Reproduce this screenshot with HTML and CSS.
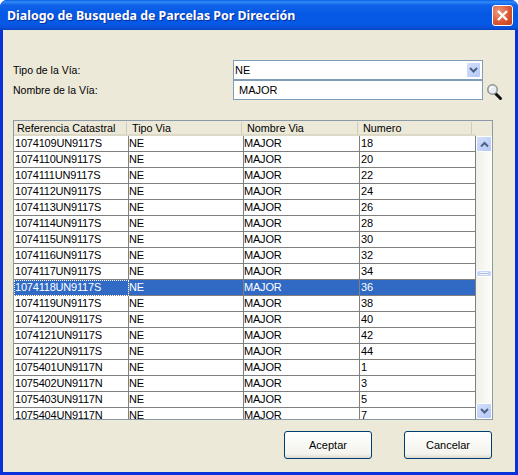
FILE: index.html
```html
<!DOCTYPE html>
<html lang="es">
<head>
  <meta charset="UTF-8">
  <title>Dialogo de Busqueda de Parcelas Por Dirección</title>
  <link rel="stylesheet" href="styles.css">
</head>
<body>

<div class="window">
  <div class="titlebar">
    <span class="title">Dialogo de Busqueda de Parcelas Por Dirección</span>
    <button class="close" aria-label="Cerrar">
      <svg width="13" height="13" viewBox="0 0 13 13"><path d="M2 2l9 9M11 2l-9 9" stroke="#fff" stroke-width="2.4" fill="none"/></svg>
    </button>
  </div>

  <div class="content">
    <div class="form">
      <label>Tipo de la Vía:</label>
      <div class="field combo">
        <span>NE</span>
        <span class="sbtn combo-btn">
          <svg width="9" height="7" viewBox="0 0 9 7"><path d="M1 1l3.5 3.5L8 1" stroke="#4d6185" stroke-width="2" fill="none"/></svg>
        </span>
      </div>
      <span></span>
      <label>Nombre de la Vía:</label>
      <div class="field text">MAJOR</div>
      <svg class="lens" width="17" height="18" viewBox="0 0 17 18">
        <path d="M9.5 10.5l5 5" stroke="#111" stroke-width="3" stroke-linecap="round"/>
        <circle cx="6.5" cy="6.5" r="4.7" fill="#e8eef0" stroke="#8a9296" stroke-width="1.5"/>
        <path d="M4 7a3 3 0 0 1 3-3" stroke="#fff" stroke-width="1.2" fill="none"/>
      </svg>
    </div>

    <div class="grid">
      <div class="grid-main">
        <table>
          <thead>
            <tr>
              <th><span>Referencia Catastral</span></th>
              <th><span>Tipo Via</span></th>
              <th><span>Nombre Via</span></th>
              <th><span>Numero</span></th>
            </tr>
          </thead>
          <tbody id="rows"></tbody>
        </table>
      </div>
      <div class="scrollbar">
        <div class="scroll-head"></div>
        <span class="sbtn">
          <svg width="9" height="7" viewBox="0 0 9 7"><path d="M1 5.5L4.5 2 8 5.5" stroke="#4d6185" stroke-width="2" fill="none"/></svg>
        </span>
        <div class="track"><span class="thumb"><span class="grip"></span></span></div>
        <span class="sbtn">
          <svg width="9" height="7" viewBox="0 0 9 7"><path d="M1 1l3.5 3.5L8 1" stroke="#4d6185" stroke-width="2" fill="none"/></svg>
        </span>
      </div>
    </div>

    <div class="actions">
      <button class="btn">Aceptar</button>
      <button class="btn">Cancelar</button>
    </div>
  </div>
</div>

<script>
const parcels = [
  ["1074109UN9117S", 18], ["1074110UN9117S", 20], ["1074111UN9117S", 22],
  ["1074112UN9117S", 24], ["1074113UN9117S", 26], ["1074114UN9117S", 28],
  ["1074115UN9117S", 30], ["1074116UN9117S", 32], ["1074117UN9117S", 34],
  ["1074118UN9117S", 36], ["1074119UN9117S", 38], ["1074120UN9117S", 40],
  ["1074121UN9117S", 42], ["1074122UN9117S", 44], ["1075401UN9117N", 1],
  ["1075402UN9117N", 3], ["1075403UN9117N", 5], ["1075404UN9117N", 7]
];

const tbody = document.getElementById("rows");

parcels.forEach(([ref, num]) => {
  const tr = document.createElement("tr");
  if (ref === "1074118UN9117S") tr.className = "selected";
  tr.innerHTML = `<td>${ref}</td><td>NE</td><td>MAJOR</td><td>${num}</td>`;
  tbody.appendChild(tr);
});
</script>

</body>
</html>
```

FILE: styles.css
```css
html, body {
  margin: 0;
  padding: 0;
  background: #fff;
}
.window {
  width: 518px;
  height: 475px;
  box-sizing: border-box;
  display: flex;
  flex-direction: column;
  background: #0831d9;
  border-radius: 7px 7px 0 0;
  overflow: hidden;
  font-family: "Liberation Sans", Arial, sans-serif;
  font-size: 10.5px;
  color: #000;
}
.titlebar {
  height: 30px;
  flex: none;
  display: flex;
  align-items: center;
  justify-content: space-between;
  padding: 0 5px 0 7px;
  background: linear-gradient(#0a5fe6 0, #2f8bf8 2px, #0f62e8 5px, #0558e4 14px, #0559e6 24px, #0a4fd6 28px, #0840c0 30px);
}
.title {
  font-family: "Noto Sans", sans-serif;
  font-weight: bold;
  font-size: 12.4px;
  color: #fff;
  text-shadow: 1px 1px 0 #0a2f9a;
}
.close {
  width: 21px;
  height: 21px;
  padding: 0;
  display: flex;
  align-items: center;
  justify-content: center;
  border: 1px solid #fff;
  border-radius: 3px;
  background: radial-gradient(circle at 30% 30%, #ec9a80, #d9532d 60%, #c0401e);
}
.content {
  flex: 1;
  margin: 0 3px 3px;
  padding: 30px 10px 0;
  background: #ece9d8;
  display: flex;
  flex-direction: column;
}
.form {
  display: grid;
  grid-template-columns: 220px 250px 17px;
  grid-auto-rows: 20px;
  align-items: center;
}
.field {
  height: 20px;
  box-sizing: border-box;
  border: 1px solid #7f9db9;
  background: #fff;
  font-size: 11px;
  line-height: 18px;
}
.combo {
  display: flex;
  justify-content: space-between;
  padding-left: 1px;
}
.text {
  padding-left: 5px;
}
.sbtn {
  width: 15px;
  height: 15px;
  flex: none;
  display: flex;
  align-items: center;
  justify-content: center;
  border: 1px solid #fff;
  border-radius: 2px;
  box-sizing: border-box;
  background: linear-gradient(135deg, #d3dffb, #b4c8f6);
}
.combo-btn {
  margin: 1px 1px 0 0;
  height: 16px;
}
.lens {
  margin: 3px 0 0 3px;
}
.grid {
  margin-top: 20px;
  height: 300px;
  box-sizing: border-box;
  width: 480px;
  border: 1px solid #8a9aa8;
  display: flex;
  background: #f4f3ee;
}
.grid-main {
  width: 462px;
  flex: none;
  overflow: hidden;
}
table {
  width: 462px;
  table-layout: fixed;
  border-collapse: separate;
  border-spacing: 0;
}
th {
  height: 15px;
  padding: 0;
  font-weight: normal;
  font-size: 10.8px;
  text-align: left;
  background: #ece9d8;
  border-bottom: 2px solid #dcd9c6;
  box-sizing: border-box;
}
th span {
  display: block;
  height: 12px;
  line-height: 12px;
  padding-left: 3px;
  border-right: 1px solid #cfccba;
  margin-right: 2px;
}
th:nth-child(1) { width: 115px; }
th:nth-child(2) { width: 115px; }
th:nth-child(3) { width: 116px; }
th:nth-child(4) { width: 116px; }
th:nth-child(4) span { margin-right: 4px; }
td {
  height: 16px;
  padding: 0 0 0 1px;
  box-sizing: border-box;
  background: #fff;
  border-right: 1px solid #808080;
  border-bottom: 1px solid #808080;
  line-height: 15px;
  font-size: 11px;
  letter-spacing: -0.2px;
  white-space: nowrap;
}
td:nth-child(2), td:nth-child(3) {
  padding-left: 0;
}
tr.selected td {
  background: #316ac5;
  color: #fff;
}
tr.selected td:first-child {
  outline: 1px dotted #fff;
  outline-offset: -1px;
}
.scrollbar {
  flex: 1;
  box-sizing: border-box;
  display: flex;
  flex-direction: column;
  background: linear-gradient(90deg, #f1f0ea, #fdfdfa);
}
.scroll-head {
  height: 15px;
  flex: none;
  background: #ece9d8;
}
.scrollbar .sbtn {
  width: 16px;
  height: 16px;
}
.track {
  flex: 1;
  min-height: 0;
}
.thumb {
  display: flex;
  align-items: center;
  justify-content: center;
  width: 16px;
  height: 7px;
  box-sizing: border-box;
  margin-top: 118px;
  border: 1px solid #fff;
  border-radius: 3px;
  background: #c3d3f8;
}
.grip {
  width: 8px;
  height: 3px;
  background: repeating-linear-gradient(#f2f5fe 0 1px, #a9bdec 1px 2px);
}
.actions {
  display: flex;
  justify-content: flex-end;
  gap: 32px;
  margin-top: 11px;
  padding-right: 13px;
}
.btn {
  width: 88px;
  height: 28px;
  padding: 0;
  border: 1px solid #003c74;
  border-radius: 3px;
  background: linear-gradient(#fff, #f4f3ec 85%, #dcd8ca);
  font-family: inherit;
  font-size: 11px;
  color: #000;
}
```
